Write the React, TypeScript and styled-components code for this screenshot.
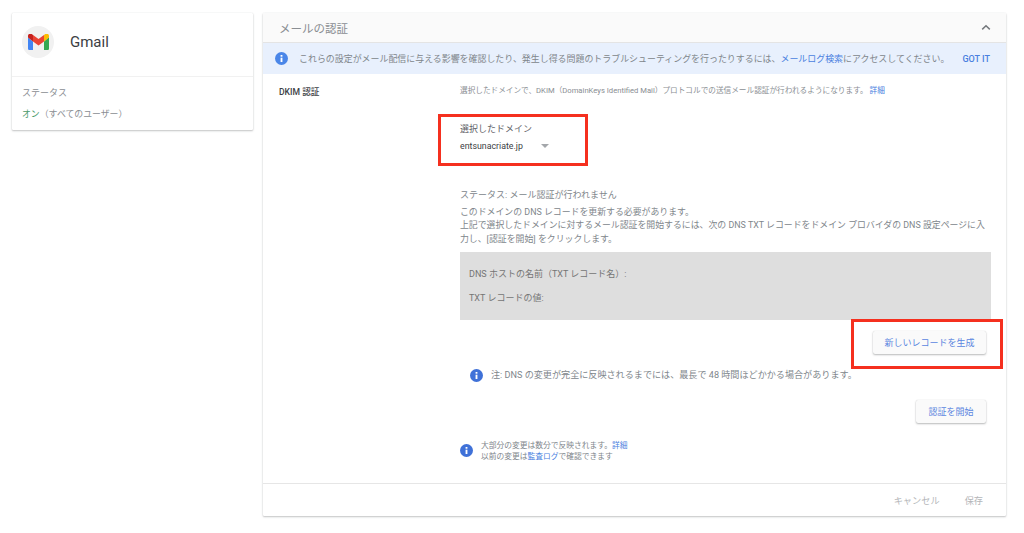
import React from "react";
import styled, { createGlobalStyle } from "styled-components";

const Global = createGlobalStyle`
  html, body { margin: 0; padding: 0; background: #fff; }
  body { font-family: Roboto, "Noto Sans CJK JP", sans-serif; width: 1024px; height: 533px; overflow: hidden; }
`;

const Page = styled.div`
  position: relative;
  display: flex;
  align-items: flex-start;
  gap: 10px;
  padding: 13px 18px 0 12px;
  width: 1024px;
  height: 533px;
  box-sizing: border-box;
`;

const Card = styled.section`
  background: #fff;
  border-radius: 1px;
  box-shadow: 0 1px 2px rgba(60, 64, 67, 0.3), 0 0 1px rgba(60, 64, 67, 0.2);
`;

const AppCard = styled(Card)`
  width: 241px;
  height: 117px;
  flex: none;
`;

const AppHead = styled.div`
  display: flex;
  align-items: center;
  gap: 16px;
  height: 64px;
  padding: 0 0 6px 10px;
  box-sizing: border-box;
  border-bottom: 1px solid #f1f1f1;
`;

const LogoDisc = styled.div`
  width: 32px;
  height: 32px;
  border-radius: 50%;
  background: #f1f1f1;
  display: flex;
  align-items: center;
  justify-content: center;
`;

const AppName = styled.div`
  font-size: 15px;
  color: #3c4043;
`;

const AppBody = styled.div`
  padding: 10px 10px;
  font-size: 9px;
  line-height: 13px;
  color: #8a8e93;
`;

const AppStatusValue = styled.div`
  margin-top: 7px;
  font-size: 8.9px;
  line-height: 14px;
`;

const On = styled.span`
  color: #4a9a6a;
`;

const MainCard = styled(Card)`
  width: 743px;
  height: 503px;
  flex: none;
  display: flex;
  flex-direction: column;
`;

const Header = styled.header`
  height: 30px;
  flex: none;
  background: #fafafa;
  border-bottom: 1px solid #e4e4e4;
  box-sizing: border-box;
  display: flex;
  align-items: center;
  justify-content: space-between;
  padding: 0 15px 0 16px;
  font-size: 11.5px;
  color: #8a8e93;
`;

const Banner = styled.div`
  height: 31px;
  flex: none;
  background: #e8f0fd;
  display: flex;
  align-items: center;
  padding: 0 16px 0 12px;
  font-size: 8.95px;
  color: #80868b;
`;

const BannerText = styled.div`
  margin-left: 11px;
  flex: 1;
  white-space: nowrap;
`;

const Link = styled.span`
  color: #4a7fe0;
`;

const GotIt = styled.span`
  font-size: 9px;
  font-weight: 500;
  color: #4a7fe0;
  white-space: nowrap;
`;

const Content = styled.div`
  flex: 1;
  display: grid;
  grid-template-columns: 197px 531px;
`;

const RowLabel = styled.div`
  padding: 11px 0 0 16px;
  font-size: 8.6px;
  font-weight: 500;
  color: #3c4043;
`;

const Column = styled.div`
  padding-top: 12px;
  display: flex;
  flex-direction: column;
`;

const Hint = styled.div`
  font-size: 7.65px;
  line-height: 10px;
  color: #8a8e93;
  white-space: nowrap;
`;

const DomainLabel = styled.div`
  margin-top: 27px;
  font-size: 9px;
  line-height: 12px;
  color: #5f6368;
`;

const DomainSelect = styled.div`
  margin-top: 5px;
  display: flex;
  align-items: center;
  gap: 18px;
  font-size: 8.8px;
  line-height: 12px;
  color: #3c4043;
`;

const Caret = styled.span`
  width: 0;
  height: 0;
  border-left: 4px solid transparent;
  border-right: 4px solid transparent;
  border-top: 4px solid #a4a7ab;
`;

const Status = styled.div`
  margin-top: 37px;
  font-size: 9px;
  line-height: 12px;
  color: #80868b;
`;

const Paragraph = styled.div`
  margin-top: 5px;
  font-size: 8.9px;
  line-height: 13.3px;
  color: #80868b;
`;

const RecordBox = styled.div`
  margin-top: 6px;
  height: 68px;
  background: #dedede;
  box-sizing: border-box;
  padding: 16px 9px;
  font-size: 9px;
  color: #757575;
  display: flex;
  flex-direction: column;
  gap: 12px;
  line-height: 12px;
`;

const ActionRow = styled.div<{ $top: number }>`
  display: flex;
  justify-content: flex-end;
  margin-top: ${(p) => p.$top}px;
  padding-right: 5px;
`;

const RaisedButton = styled.button<{ $w: number }>`
  width: ${(p) => p.$w}px;
  height: 23px;
  border: 0;
  padding: 0;
  border-radius: 2px;
  background: #fafafa;
  color: #5a86e0;
  font-family: inherit;
  font-size: 9px;
  box-shadow: 0 1px 2px rgba(60, 64, 67, 0.35), 0 0 1px rgba(60, 64, 67, 0.2);
`;

const NoteRow = styled.div<{ $left: number; $top: number }>`
  display: flex;
  align-items: center;
  gap: 8px;
  margin-top: ${(p) => p.$top}px;
  margin-left: ${(p) => p.$left}px;
`;

const NoteText = styled.div`
  font-size: 9.1px;
  line-height: 12px;
  color: #80868b;
  white-space: nowrap;
`;

const SmallNote = styled.div`
  font-size: 7.75px;
  line-height: 11px;
  color: #80868b;
  white-space: nowrap;
`;

const Footer = styled.footer`
  height: 33px;
  flex: none;
  border-top: 1px solid #e6e6e6;
  box-sizing: border-box;
  display: flex;
  justify-content: flex-end;
  align-items: center;
  gap: 25px;
  padding: 0 23px 0 0;
  font-size: 9.2px;
  color: #b4b6b9;
`;

const Highlight = styled.div<{ $x: number; $y: number; $w: number; $h: number }>`
  position: absolute;
  left: ${(p) => p.$x}px;
  top: ${(p) => p.$y}px;
  width: ${(p) => p.$w}px;
  height: ${(p) => p.$h}px;
  box-sizing: border-box;
  border: 3px solid #f5301f;
  pointer-events: none;
`;

const InfoIcon = ({ size, color = "#3f71d8" }: { size: number; color?: string }) => (
  <svg width={size} height={size} viewBox="0 0 24 24" style={{ flex: "none" }}>
    <circle cx="12" cy="12" r="12" fill={color} />
    <rect x="10.3" y="10.5" width="3.4" height="8" fill="#fff" />
    <rect x="10.3" y="5.5" width="3.4" height="3.2" fill="#fff" />
  </svg>
);

const GmailLogo = () => (
  <svg width="21" height="16" viewBox="0 0 21 16">
    <path d="M0 3v11.4C0 15.3.7 16 1.6 16H5V7.5L0 3.5z" fill="#4285f4" />
    <path d="M16 16h3.4c.9 0 1.6-.7 1.6-1.6V3l-5 4.5z" fill="#34a853" />
    <path d="M16 1v6.5L21 3.6V2c0-1.9-2.2-3-3.7-1.9z" fill="#fbbc04" />
    <path d="M5 7.5V1l5.5 4.1L16 1v6.5l-5.5 4.1z" fill="#ea4335" />
    <path d="M0 2v1.6l5 3.9V1L3.7.1C2.2-1 0 .1 0 2z" fill="#c5221f" />
  </svg>
);

const Chevron = () => (
  <svg width="10" height="7" viewBox="0 0 10 7">
    <path d="M1.2 5.4 5 1.8l3.8 3.6" fill="none" stroke="#75797d" strokeWidth="1.5" />
  </svg>
);

export default function App() {
  return (
    <>
      <Global />
      <Page>
        <AppCard>
          <AppHead>
            <LogoDisc>
              <GmailLogo />
            </LogoDisc>
            <AppName>Gmail</AppName>
          </AppHead>
          <AppBody>
            <div>ステータス</div>
            <AppStatusValue>
              <On>オン</On>（すべてのユーザー）
            </AppStatusValue>
          </AppBody>
        </AppCard>
        <MainCard>
          <Header>
            <span>メールの認証</span>
            <Chevron />
          </Header>
          <Banner>
            <InfoIcon size={13} color="#4a86e8" />
            <BannerText>
              これらの設定がメール配信に与える影響を確認したり、発生し得る問題のトラブルシューティングを行ったりするには、<Link>メールログ検索</Link>にアクセスしてください。
            </BannerText>
            <GotIt>GOT IT</GotIt>
          </Banner>
          <Content>
            <RowLabel>DKIM 認証</RowLabel>
            <Column>
              <Hint>
                選択したドメインで、DKIM（DomainKeys Identified Mail）プロトコルでの送信メール認証が行われるようになります。 <Link>詳細</Link>
              </Hint>
              <DomainLabel>選択したドメイン</DomainLabel>
              <DomainSelect>
                <span>entsunacriate.jp</span>
                <Caret />
              </DomainSelect>
              <Status>ステータス: メール認証が行われません</Status>
              <Paragraph>
                このドメインの DNS レコードを更新する必要があります。
                <br />
                上記で選択したドメインに対するメール認証を開始するには、次の DNS TXT レコードをドメイン プロバイダの DNS 設定ページに入力し、[認証を開始] をクリックします。
              </Paragraph>
              <RecordBox>
                <div>DNS ホストの名前（TXT レコード名）:</div>
                <div>TXT レコードの値:</div>
              </RecordBox>
              <ActionRow $top={11}>
                <RaisedButton $w={113}>新しいレコードを生成</RaisedButton>
              </ActionRow>
              <NoteRow $left={10} $top={15}>
                <InfoIcon size={13} />
                <NoteText>注: DNS の変更が完全に反映されるまでには、最長で 48 時間ほどかかる場合があります。</NoteText>
              </NoteRow>
              <ActionRow $top={18}>
                <RaisedButton $w={70}>認証を開始</RaisedButton>
              </ActionRow>
              <NoteRow $left={0} $top={17}>
                <InfoIcon size={13} />
                <SmallNote>
                  大部分の変更は数分で反映されます。<Link>詳細</Link>
                  <br />
                  以前の変更は<Link>監査ログ</Link>で確認できます
                </SmallNote>
              </NoteRow>
            </Column>
          </Content>
          <Footer>
            <span>キャンセル</span>
            <span>保存</span>
          </Footer>
        </MainCard>
        <Highlight $x={438} $y={114} $w={150} $h={52} />
        <Highlight $x={851} $y={319} $w={152} $h={50} />
      </Page>
    </>
  );
}
